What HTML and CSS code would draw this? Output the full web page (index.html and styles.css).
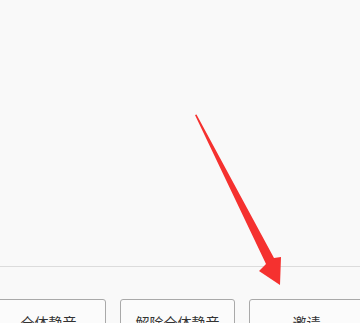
FILE: index.html
```html
<!DOCTYPE html>
<html lang="zh-CN">
<head>
    <meta charset="UTF-8">
    <meta name="viewport" content="width=device-width, initial-scale=1.0">
    <title>成员管理</title>
    <link rel="stylesheet" href="styles.css">
</head>
<body>

    <div class="stage"></div>

    <div class="toolbar">
        <button class="tool-btn">全体静音</button>
        <button class="tool-btn">解除全体静音</button>
        <button class="tool-btn">邀请</button>
    </div>

    <!-- annotation arrow pointing at the invite button -->
    <svg class="pointer" width="360" height="323" viewBox="0 0 360 323">
        <polygon points="195,115 196.5,114.5 274,258 281,257 280,285 259,271 266,264" fill="#f5312f"/>
    </svg>

</body>
</html>
```

FILE: styles.css
```css
body {
    margin: 0;
    height: 323px;
    overflow: hidden;
    background: #f9f9f9;
    font-family: "Noto Sans CJK SC", "Liberation Sans", sans-serif;
    display: flex;
    flex-direction: column;
    position: relative;
}

.stage {
    flex: 1;
}

/* Bottom toolbar */
.toolbar {
    flex: none;
    height: 57px;
    box-sizing: border-box;
    border-top: 1px solid #dcdcdc;
    padding-top: 32px;
    display: flex;
    align-items: flex-start;
    gap: 14px;
    margin-left: -9px;
}

.tool-btn {
    flex: none;
    width: 115px;
    height: 46px;
    background: #fbfbfb;
    border: 1px solid #a9a9a9;
    border-radius: 3px;
    font-family: inherit;
    font-size: 14px;
    color: #333;
    padding: 0;
}

.pointer {
    position: absolute;
    left: 0;
    top: 0;
}
```
